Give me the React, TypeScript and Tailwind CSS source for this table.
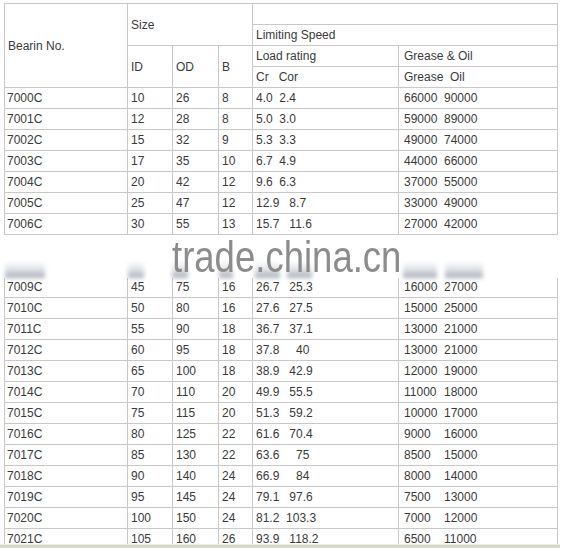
import React from "react";

type Row = {
	no: string;
	id?: string;
	od?: string;
	b?: string;
	load?: string;
	grease?: string;
	oil?: string;
};

const rows: Row[] = [
	{ no: "7000C", id: "10", od: "26", b: "8", load: "4.0  2.4", grease: "66000", oil: "90000" },
	{ no: "7001C", id: "12", od: "28", b: "8", load: "5.0  3.0", grease: "59000", oil: "89000" },
	{ no: "7002C", id: "15", od: "32", b: "9", load: "5.3  3.3", grease: "49000", oil: "74000" },
	{ no: "7003C", id: "17", od: "35", b: "10", load: "6.7  4.9", grease: "44000", oil: "66000" },
	{ no: "7004C", id: "20", od: "42", b: "12", load: "9.6  6.3", grease: "37000", oil: "55000" },
	{ no: "7005C", id: "25", od: "47", b: "12", load: "12.9   8.7", grease: "33000", oil: "49000" },
	{ no: "7006C", id: "30", od: "55", b: "13", load: "15.7   11.6", grease: "27000", oil: "42000" },
	{ no: "" },
	{ no: "" },
	{ no: "7009C", id: "45", od: "75", b: "16", load: "26.7   25.3", grease: "16000", oil: "27000" },
	{ no: "7010C", id: "50", od: "80", b: "16", load: "27.6   27.5", grease: "15000", oil: "25000" },
	{ no: "7011C", id: "55", od: "90", b: "18", load: "36.7   37.1", grease: "13000", oil: "21000" },
	{ no: "7012C", id: "60", od: "95", b: "18", load: "37.8     40", grease: "13000", oil: "21000" },
	{ no: "7013C", id: "65", od: "100", b: "18", load: "38.9   42.9", grease: "12000", oil: "19000" },
	{ no: "7014C", id: "70", od: "110", b: "20", load: "49.9   55.5", grease: "11000", oil: "18000" },
	{ no: "7015C", id: "75", od: "115", b: "20", load: "51.3   59.2", grease: "10000", oil: "17000" },
	{ no: "7016C", id: "80", od: "125", b: "22", load: "61.6   70.4", grease: "9000", oil: "16000" },
	{ no: "7017C", id: "85", od: "130", b: "22", load: "63.6     75", grease: "8500", oil: "15000" },
	{ no: "7018C", id: "90", od: "140", b: "24", load: "66.9     84", grease: "8000", oil: "14000" },
	{ no: "7019C", id: "95", od: "145", b: "24", load: "79.1   97.6", grease: "7500", oil: "13000" },
	{ no: "7020C", id: "100", od: "150", b: "24", load: "81.2  103.3", grease: "7000", oil: "12000" },
	{ no: "7021C", id: "105", od: "160", b: "26", load: "93.9   118.2", grease: "6500", oil: "11000" },
];

const td = "border border-[#c8c8c8] px-[3px] h-[21px] p-0 align-middle whitespace-pre";

// blurred streaks left by the watermark, over the 7009C row
const smudges = [
	"left-[5px] w-[40px]",
	"left-[128px] w-[16px]",
	"left-[172px] w-[16px]",
	"left-[219px] w-[14px]",
	"left-[255px] w-[25px]",
	"left-[287px] w-[25px]",
	"left-[403px] w-[34px]",
	"left-[445px] w-[38px]",
];

export default function App() {
	return (
		<div className="w-[571px] bg-white font-['Liberation_Sans',Arial,sans-serif] text-[12px] text-[#3a3a3a]">
			<div className="relative h-[544px] overflow-hidden pt-[3px] pl-[4px]">
				<table className="border-collapse table-fixed w-[553px] leading-[14px]">
					<colgroup>
						<col className="w-[123px]" />
						<col className="w-[45px]" />
						<col className="w-[46px]" />
						<col className="w-[34px]" />
						<col className="w-[146px]" />
						<col className="w-[159px]" />
					</colgroup>
					<tbody>
						<tr>
							<td rowSpan={4} className={td}>Bearin No.</td>
							<td rowSpan={2} colSpan={3} className={td}>Size</td>
							<td colSpan={2} className={td}></td>
						</tr>
						<tr>
							<td colSpan={2} className={td}>Limiting Speed</td>
						</tr>
						<tr>
							<td rowSpan={2} className={td}>ID</td>
							<td rowSpan={2} className={td}>OD</td>
							<td rowSpan={2} className={td}>B</td>
							<td className={td}>Load rating</td>
							<td className={`${td} pl-[5px]`}>Grease &amp; Oil</td>
						</tr>
						<tr>
							<td className={td}>{"Cr   Cor"}</td>
							<td className={`${td} pl-[5px]`}>{"Grease  Oil"}</td>
						</tr>
						{rows.map((r, i) => (
							<tr key={i}>
								<td className={`${td} pl-[2px]`}>{r.no}</td>
								<td className={td}>{r.id}</td>
								<td className={td}>{r.od}</td>
								<td className={td}>{r.b}</td>
								<td className={td}>{r.load}</td>
								<td className={`${td} pl-[5px]`}>
									{r.grease && (
										<>
											<span className="inline-block w-[40px]">{r.grease}</span>
											<span>{r.oil}</span>
										</>
									)}
								</td>
							</tr>
						))}
					</tbody>
				</table>

				{/* watermark band */}
				<div className="absolute left-0 top-[235px] h-[43px] w-[571px] bg-white">
					{smudges.map((s, i) => (
						<div key={i} className={`absolute top-[26px] h-[17px] ${s} bg-gradient-to-b from-transparent via-gray-400/30 to-gray-500/60 blur-[2px]`} />
					))}
					<div className="absolute left-[172px] top-[3px] origin-left scale-x-[0.83] text-[44px] leading-[38px] text-[#8c8c8c] whitespace-nowrap">
						trade.china.cn
					</div>
				</div>
			</div>
			<div className="h-[4px] w-[560px] bg-[#d6d8cc] border-t border-[#eceee4]" />
		</div>
	);
}
